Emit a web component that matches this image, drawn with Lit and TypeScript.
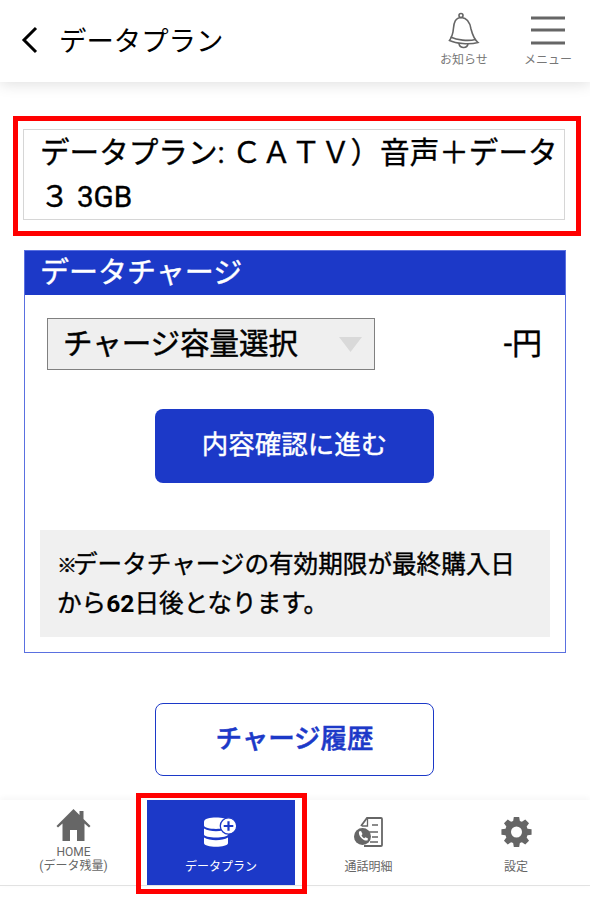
import {LitElement, css, html, svg} from 'lit';
import {customElement} from 'lit/decorators.js';

const homeIcon = svg`<path d="M17.5 0 L23.5 6 V2 H27.5 V10 L34.5 17 L33 18.5 L28.5 14.5 V32 H21 V21 H14 V32 H6.5 V14.5 L2 18.5 L0.5 17 Z" fill="#666"/>`;

const dataIcon = svg`
  <path d="M0 4.5 C0 -1 24 -1 24 4.5 V8.5 C24 13 0 13 0 8.5 Z" fill="#fff"/>
  <path d="M0 11.5 C6 15 18 15 24 11.5 V17.5 C24 21.5 0 21.5 0 17.5 Z" fill="#fff"/>
  <path d="M0 20.5 C6 24 18 24 24 20.5 V26 C24 31 0 31 0 26 Z" fill="#fff"/>
  <circle cx="24.5" cy="9" r="8.2" fill="#fff" stroke="#1c39c8" stroke-width="1.3"/>
  <path d="M24.5 4.2 V13.8 M19.7 9 H29.3" stroke="#1c39c8" stroke-width="2.2" fill="none"/>`;

const callsIcon = svg`
  <path d="M7 9 L13 1 H27 Q28 1 28 2 V28 Q28 29 27 29 H10" fill="none" stroke="#666" stroke-width="1.8"/>
  <path d="M8 9 H13.5 V2" fill="none" stroke="#666" stroke-width="1.3"/>
  <path d="M18 8 H24 M15 15 H24 M18 20 H24 M16 25 H24" stroke="#666" stroke-width="1.7"/>
  <circle cx="8.5" cy="19.5" r="8.5" fill="#666"/>
  <path d="M5 14.5 L7 14 L8.5 17 L7.5 18.5 C8 19.7 9 20.7 10.2 21.2 L11.5 20.2 L14 21.5 L13.5 23.5 C9.5 24.5 4 19 5 14.5 Z" fill="#fff"/>`;

// Eight-toothed gear outline, with the hub cut out by the even-odd rule.
function gearPath() {
  const point = (radius: number, degrees: number) => {
    const angle = degrees * Math.PI / 180;
    return `${(15.5 + radius * Math.cos(angle)).toFixed(2)} ${(15 + radius * Math.sin(angle)).toFixed(2)}`;
  };
  const corners: string[] = [];
  for (let i = 0; i < 8; i++) {
    const a = i * 45;
    corners.push(point(11.5, a - 17), point(15.3, a - 10), point(15.3, a + 10), point(11.5, a + 17));
  }
  return `M${corners.join(' L')} Z M21 15 A5.5 5.5 0 1 0 10 15 A5.5 5.5 0 1 0 21 15 Z`;
}

const gearIcon = svg`<path fill-rule="evenodd" fill="#666" d="${gearPath()}"/>`;

@customElement('app-root')
export class AppRoot extends LitElement {
  static styles = css`
    :host {
      --blue: #1c39c8;
      display: block;
      position: relative;
      width: 590px;
      height: 899px;
      overflow: hidden;
      background: #fff;
      color: #000;
      font-family: Roboto, "Noto Sans CJK JP", "Noto Sans", sans-serif;
    }

    .header {
      display: flex;
      align-items: flex-start;
      height: 82px;
      padding-left: 20px;
      box-sizing: border-box;
      background: #fff;
      box-shadow: 0 2px 14px rgba(0, 0, 0, .13);
    }
    .back {
      width: 20px;
      height: 30px;
      margin-top: 25px;
    }
    .title {
      margin-left: 19px;
      font-size: 27.4px;
      line-height: 40px;
      margin-top: 22px;
      flex: 1;
    }
    .header-action {
      display: flex;
      flex-direction: column;
      align-items: center;
      width: 64px;
      color: #777;
      font-size: 12px;
      line-height: 16px;
    }
    .header-action svg {
      display: block;
      height: 38px;
      margin-top: 12px;
      margin-bottom: 2px;
    }
    .header-action.bell {
      margin-right: 20px;
    }
    .header-action.menu {
      margin-right: 10px;
    }

    .plan {
      margin: 47px 25px 0 23px;
      height: 91px;
      box-sizing: border-box;
      border: 1px solid #d6d6d6;
      padding: 0 0 0 16px;
      font-size: 29.6px;
      line-height: 44px;
      -webkit-text-stroke: .35px;
    }
    .plan-text {
      margin: 1px 0 0;
    }

    .card {
      margin: 30px 24px 0 24px;
      height: 403px;
      box-sizing: border-box;
      border: 1px solid #5a70e0;
    }
    .card-title {
      height: 44px;
      background: var(--blue);
      color: #fff;
      font-size: 29px;
      line-height: 44px;
      padding-left: 15px;
      -webkit-text-stroke: .4px;
    }
    .charge-row {
      display: flex;
      align-items: center;
      justify-content: space-between;
      margin: 23px 23px 0 22px;
    }
    .select {
      display: flex;
      align-items: center;
      justify-content: space-between;
      width: 328px;
      height: 52px;
      box-sizing: border-box;
      border: 1px solid #808080;
      background: #efefef;
      padding: 0 12px 0 15px;
      font-size: 29.5px;
      -webkit-text-stroke: .5px;
    }
    .select span {
      margin-bottom: 6px;
    }
    .caret {
      width: 23px;
      height: 15px;
    }
    .price {
      margin-bottom: 7px;
      font-size: 30px;
      -webkit-text-stroke: .4px;
    }
    .btn {
      display: flex;
      align-items: center;
      justify-content: center;
      width: 279px;
      box-sizing: border-box;
      border-radius: 8px;
      font-size: 26.5px;
    }
    .btn.primary {
      height: 74px;
      padding-bottom: 7px;
      margin: 39px 0 0 130px;
      background: var(--blue);
      color: #fff;
      -webkit-text-stroke: .4px;
    }
    .note {
      margin: 47px 15px 0 15px;
      height: 107px;
      box-sizing: border-box;
      padding: 16px 0 0 17px;
      background: #f0f0f0;
      font-size: 24.6px;
      line-height: 38px;
      -webkit-text-stroke: .4px;
    }
    .kome {
      font-size: 20px;
      font-weight: 700;
      letter-spacing: -4px;
    }
    .days {
      font-weight: 700;
      -webkit-text-stroke: 0;
    }
    .btn.outline {
      height: 73px;
      padding-bottom: 7px;
      margin: 50px 0 0 155px;
      border: 1px solid var(--blue);
      background: #fff;
      color: var(--blue);
      font-weight: 500;
      -webkit-text-stroke: .5px;
    }

    .nav {
      display: grid;
      grid-template-columns: 147px 148px 147px 148px;
      margin-top: 24px;
      height: 86px;
      box-sizing: border-box;
      border-bottom: 1px solid #e2e2e2;
      background: #fff;
      box-shadow: 0 -2px 6px rgba(0, 0, 0, .04);
    }
    .nav-item {
      display: flex;
      flex-direction: column;
      align-items: center;
      color: #666;
      font-size: 12px;
      line-height: 14px;
      text-align: center;
    }
    .nav-item svg {
      display: block;
      height: 30px;
      margin-top: 17px;
    }
    .nav-item .label {
      margin-top: 13px;
    }
    .nav-item.home svg {
      height: 33px;
      margin-top: 9px;
    }
    .nav-item.home .label {
      margin-top: 3px;
    }
    .nav-item.active {
      background: var(--blue);
      color: #fff;
    }

    .mark {
      position: absolute;
      box-sizing: border-box;
      border: 5px solid #f00;
      pointer-events: none;
    }
    .mark.plan-mark {
      left: 13px;
      top: 116px;
      width: 568px;
      height: 120px;
    }
    .mark.nav-mark {
      left: 136px;
      top: 793px;
      width: 171px;
      height: 101px;
    }
  `;

  render() {
    return html`
      <header class="header">
        <svg class="back" viewBox="0 0 20 30">
          <path d="M16 3 L4 15 L16 27" fill="none" stroke="#000" stroke-width="3"/>
        </svg>
        <div class="title">データプラン</div>
        <div class="header-action bell">
          <svg viewBox="0 0 32 38" width="32">
            <g fill="none" stroke="#666" stroke-width="1.6">
              <circle cx="13" cy="3.5" r="2"/>
              <path d="M13.5 5.5 C7 5.5 6 11 5.5 16 C5 22 4 25 1.5 28.5 C8 31.5 21 33 30 30.5 C26 27 24.5 23 23 17 C22 11 20 6 13.5 5.5 Z"/>
              <path d="M2.5 25 C9 28 20 29.5 27.5 27.5"/>
              <path d="M11 31 C11 36.5 19 37 20 32"/>
            </g>
          </svg>
          <span>お知らせ</span>
        </div>
        <div class="header-action menu">
          <svg viewBox="0 0 34 38" width="34">
            <path d="M0 6 H34 M0 18 H34 M0 31 H34" stroke="#666" stroke-width="3"/>
          </svg>
          <span>メニュー</span>
        </div>
      </header>

      <section class="plan">
        <p class="plan-text">データプラン: ＣＡＴＶ）音声＋データ３ 3GB</p>
      </section>

      <section class="card">
        <div class="card-title">データチャージ</div>
        <div class="charge-row">
          <div class="select">
            <span>チャージ容量選択</span>
            <svg class="caret" viewBox="0 0 23 15"><path d="M0 0 H23 L11.5 15 Z" fill="#d9d9d9"/></svg>
          </div>
          <span class="price">-円</span>
        </div>
        <div class="btn primary">内容確認に進む</div>
        <div class="note"><span class="kome">※</span>データチャージの有効期限が最終購入日<br>から<span class="days">62</span>日後となります。</div>
      </section>

      <div class="btn outline">チャージ履歴</div>

      <nav class="nav">
        <div class="nav-item home">
          <svg viewBox="0 0 35 33" width="35">${homeIcon}</svg>
          <span class="label">HOME<br>(データ残量)</span>
        </div>
        <div class="nav-item active">
          <svg viewBox="0 0 34 30" width="34">${dataIcon}</svg>
          <span class="label">データプラン</span>
        </div>
        <div class="nav-item">
          <svg viewBox="0 0 29 30" width="29">${callsIcon}</svg>
          <span class="label">通話明細</span>
        </div>
        <div class="nav-item">
          <svg viewBox="0 0 31 30" width="31">${gearIcon}</svg>
          <span class="label">設定</span>
        </div>
      </nav>

      <div class="mark plan-mark"></div>
      <div class="mark nav-mark"></div>
    `;
  }
}
